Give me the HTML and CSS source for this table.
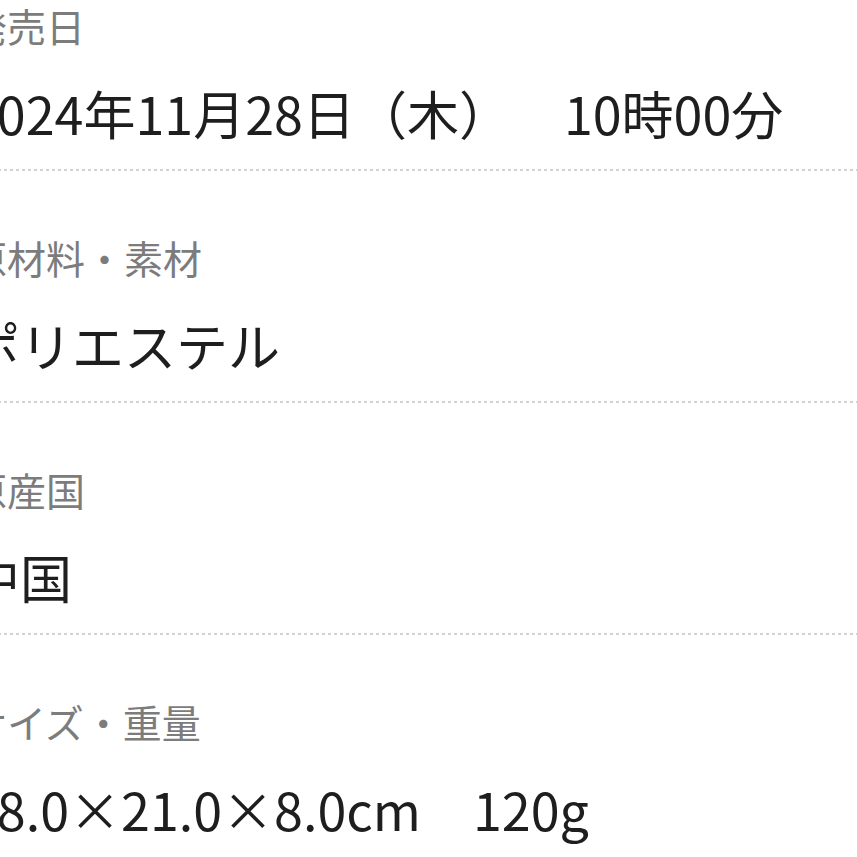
FILE: index.html
```html
<!DOCTYPE html>
<html lang="ja">
<head>
  <meta charset="UTF-8">
  <meta name="viewport" content="width=device-width, initial-scale=1.0">
  <title>商品情報</title>
  <link rel="stylesheet" href="styles.css">
</head>
<body>
  <dl class="spec-list">
    <div class="spec-row">
      <dt class="spec-label">発売日</dt>
      <dd class="spec-value">2024年11月28日（木）<span class="spec-time">10時00分</span></dd>
    </div>
    <div class="spec-row">
      <dt class="spec-label">原材料・素材</dt>
      <dd class="spec-value">ポリエステル</dd>
    </div>
    <div class="spec-row">
      <dt class="spec-label">原産国</dt>
      <dd class="spec-value">中国</dd>
    </div>
    <div class="spec-row">
      <dt class="spec-label">サイズ・重量</dt>
      <dd class="spec-value">18.0×21.0×8.0cm　120g</dd>
    </div>
  </dl>
</body>
</html>
```

FILE: styles.css
```css
body, html {
  padding: 0;
  margin: 0;
}

body {
  background-color: #fff;
  font-family: "Noto Sans CJK JP", "Noto Sans", sans-serif;
  overflow: hidden;
}

.spec-list {
  margin: -61px 0 0 -32px;
  padding: 0;
}

.spec-row {
  padding: 66px 0 26px 0;
  background: linear-gradient(to right, #d2d2d2 50%, transparent 50%) left bottom / 6px 2px repeat-x;
  border-bottom: 2px solid transparent;
  background-origin: border-box;
}

.spec-label {
  margin: 0;
  font-size: 39px;
  line-height: 40px;
  color: #7c7c7c;
}

.spec-value {
  margin: 38px 0 0 0;
  font-size: 52px;
  line-height: 60px;
  color: #1e1e1e;
  white-space: pre;
}

.spec-time {
  margin-left: 53px;
}
```
